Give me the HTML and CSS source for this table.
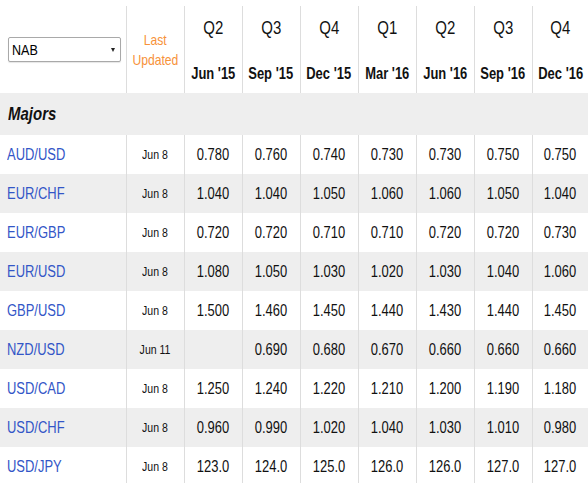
FILE: index.html
```html
<!DOCTYPE html>
<html>
<head>
<meta charset="utf-8">
<link rel="stylesheet" href="styles.css">
</head>
<body>
<table class="fx">
  <colgroup>
    <col class="c-pair"><col class="c-upd">
    <col class="c-q"><col class="c-q"><col class="c-q"><col class="c-q"><col class="c-q"><col class="c-q"><col class="c-last">
  </colgroup>
  <thead>
    <tr class="head">
      <th class="pair-h">
        <div class="select"><span class="l">NAB</span><i class="caret"></i></div>
      </th>
      <th class="upd-h"><span class="s">Last</span><br><span class="s">Updated</span></th>
      <th><div class="q"><span class="s">Q2</span></div><div class="d"><span class="s">Jun '15</span></div></th>
      <th><div class="q"><span class="s">Q3</span></div><div class="d"><span class="s">Sep '15</span></div></th>
      <th><div class="q"><span class="s">Q4</span></div><div class="d"><span class="s">Dec '15</span></div></th>
      <th><div class="q"><span class="s">Q1</span></div><div class="d"><span class="s">Mar '16</span></div></th>
      <th><div class="q"><span class="s">Q2</span></div><div class="d"><span class="s">Jun '16</span></div></th>
      <th><div class="q"><span class="s">Q3</span></div><div class="d"><span class="s">Sep '16</span></div></th>
      <th><div class="q"><span class="s">Q4</span></div><div class="d"><span class="s">Dec '16</span></div></th>
    </tr>
  </thead>
  <tbody>
    <tr class="group"><td colspan="9"><span class="l">Majors</span></td></tr>
    <tr><td class="pair"><a class="l">AUD/USD</a></td><td class="upd"><span class="s">Jun 8</span></td><td><span class="s">0.780</span></td><td><span class="s">0.760</span></td><td><span class="s">0.740</span></td><td><span class="s">0.730</span></td><td><span class="s">0.730</span></td><td><span class="s">0.750</span></td><td><span class="s">0.750</span></td></tr>
    <tr class="alt"><td class="pair"><a class="l">EUR/CHF</a></td><td class="upd"><span class="s">Jun 8</span></td><td><span class="s">1.040</span></td><td><span class="s">1.040</span></td><td><span class="s">1.050</span></td><td><span class="s">1.060</span></td><td><span class="s">1.060</span></td><td><span class="s">1.050</span></td><td><span class="s">1.040</span></td></tr>
    <tr><td class="pair"><a class="l">EUR/GBP</a></td><td class="upd"><span class="s">Jun 8</span></td><td><span class="s">0.720</span></td><td><span class="s">0.720</span></td><td><span class="s">0.710</span></td><td><span class="s">0.710</span></td><td><span class="s">0.720</span></td><td><span class="s">0.720</span></td><td><span class="s">0.730</span></td></tr>
    <tr class="alt"><td class="pair"><a class="l">EUR/USD</a></td><td class="upd"><span class="s">Jun 8</span></td><td><span class="s">1.080</span></td><td><span class="s">1.050</span></td><td><span class="s">1.030</span></td><td><span class="s">1.020</span></td><td><span class="s">1.030</span></td><td><span class="s">1.040</span></td><td><span class="s">1.060</span></td></tr>
    <tr><td class="pair"><a class="l">GBP/USD</a></td><td class="upd"><span class="s">Jun 8</span></td><td><span class="s">1.500</span></td><td><span class="s">1.460</span></td><td><span class="s">1.450</span></td><td><span class="s">1.440</span></td><td><span class="s">1.430</span></td><td><span class="s">1.440</span></td><td><span class="s">1.450</span></td></tr>
    <tr class="alt"><td class="pair"><a class="l">NZD/USD</a></td><td class="upd"><span class="s">Jun 11</span></td><td></td><td><span class="s">0.690</span></td><td><span class="s">0.680</span></td><td><span class="s">0.670</span></td><td><span class="s">0.660</span></td><td><span class="s">0.660</span></td><td><span class="s">0.660</span></td></tr>
    <tr><td class="pair"><a class="l">USD/CAD</a></td><td class="upd"><span class="s">Jun 8</span></td><td><span class="s">1.250</span></td><td><span class="s">1.240</span></td><td><span class="s">1.220</span></td><td><span class="s">1.210</span></td><td><span class="s">1.200</span></td><td><span class="s">1.190</span></td><td><span class="s">1.180</span></td></tr>
    <tr class="alt"><td class="pair"><a class="l">USD/CHF</a></td><td class="upd"><span class="s">Jun 8</span></td><td><span class="s">0.960</span></td><td><span class="s">0.990</span></td><td><span class="s">1.020</span></td><td><span class="s">1.040</span></td><td><span class="s">1.030</span></td><td><span class="s">1.010</span></td><td><span class="s">0.980</span></td></tr>
    <tr><td class="pair"><a class="l">USD/JPY</a></td><td class="upd"><span class="s">Jun 8</span></td><td><span class="s">123.0</span></td><td><span class="s">124.0</span></td><td><span class="s">125.0</span></td><td><span class="s">126.0</span></td><td><span class="s">126.0</span></td><td><span class="s">127.0</span></td><td><span class="s">127.0</span></td></tr>
  </tbody>
</table>
</body>
</html>
```

FILE: styles.css
```css
html, body {
  margin: 0;
  padding: 0;
  background: #fff;
  overflow: hidden;
}
body {
  font-family: "Liberation Sans", Arial, sans-serif;
  color: #111;
  padding-top: 6px;
}
/* condensed rendering of the original narrow face */
.s {
  display: inline-block;
  white-space: nowrap;
  transform: scaleX(0.81);
  margin: 0 -12px;
}
.l {
  display: inline-block;
  white-space: nowrap;
  transform: scaleX(0.81);
  transform-origin: left center;
}
.fx {
  width: 588px;
  border-collapse: collapse;
  table-layout: fixed;
}
.c-pair { width: 126px; }
.c-upd, .c-q { width: 58px; }
.c-last { width: 56px; }

.fx th, .fx td {
  padding: 0;
  text-align: center;
  border-left: 1px solid #dddddd;
  white-space: nowrap;
}
.fx th:first-child, .fx td:first-child { border-left: none; }

.head th {
  height: 87px;
  font-weight: normal;
  vertical-align: top;
}
.fx th.pair-h {
  vertical-align: middle;
  text-align: left;
  padding-left: 8px;
}
.select {
  height: 23px;
  width: 103px;
  border: 1px solid #a9a9a9;
  border-radius: 2px;
  box-shadow: 0 1px 1px rgba(0,0,0,0.1);
  display: flex;
  align-items: center;
  justify-content: space-between;
  padding: 0 5px 0 3px;
  box-sizing: content-box;
  background: #fff;
  font-size: 15.5px;
  color: #000;
}
.caret {
  width: 0;
  height: 0;
  border-left: 2px solid transparent;
  border-right: 2px solid transparent;
  border-top: 4px solid #222;
}
.fx th.upd-h {
  vertical-align: middle;
  color: #f7923a;
  font-size: 15px;
  line-height: 20px;
}
.q {
  font-size: 18.5px;
  line-height: 22px;
  margin-top: 11px;
  color: #111;
}
.d {
  font-size: 16px;
  line-height: 20px;
  font-weight: bold;
  margin-top: 25px;
  color: #111;
}

.group td {
  background: #eeeeee;
  height: 42px;
  text-align: left;
  padding-left: 8px;
  font-size: 18.5px;
  font-weight: bold;
  font-style: italic;
}
.fx .group td { text-align: left; padding-left: 8px; }

tbody tr:not(.group) td {
  height: 39px;
  font-size: 16px;
}
tbody tr.alt td { background: #eeeeee; }
.fx td.pair { text-align: left; padding-left: 7px; }
.pair a { color: #3356c7; text-decoration: none; }
.fx td.upd { font-size: 13px; }
```
